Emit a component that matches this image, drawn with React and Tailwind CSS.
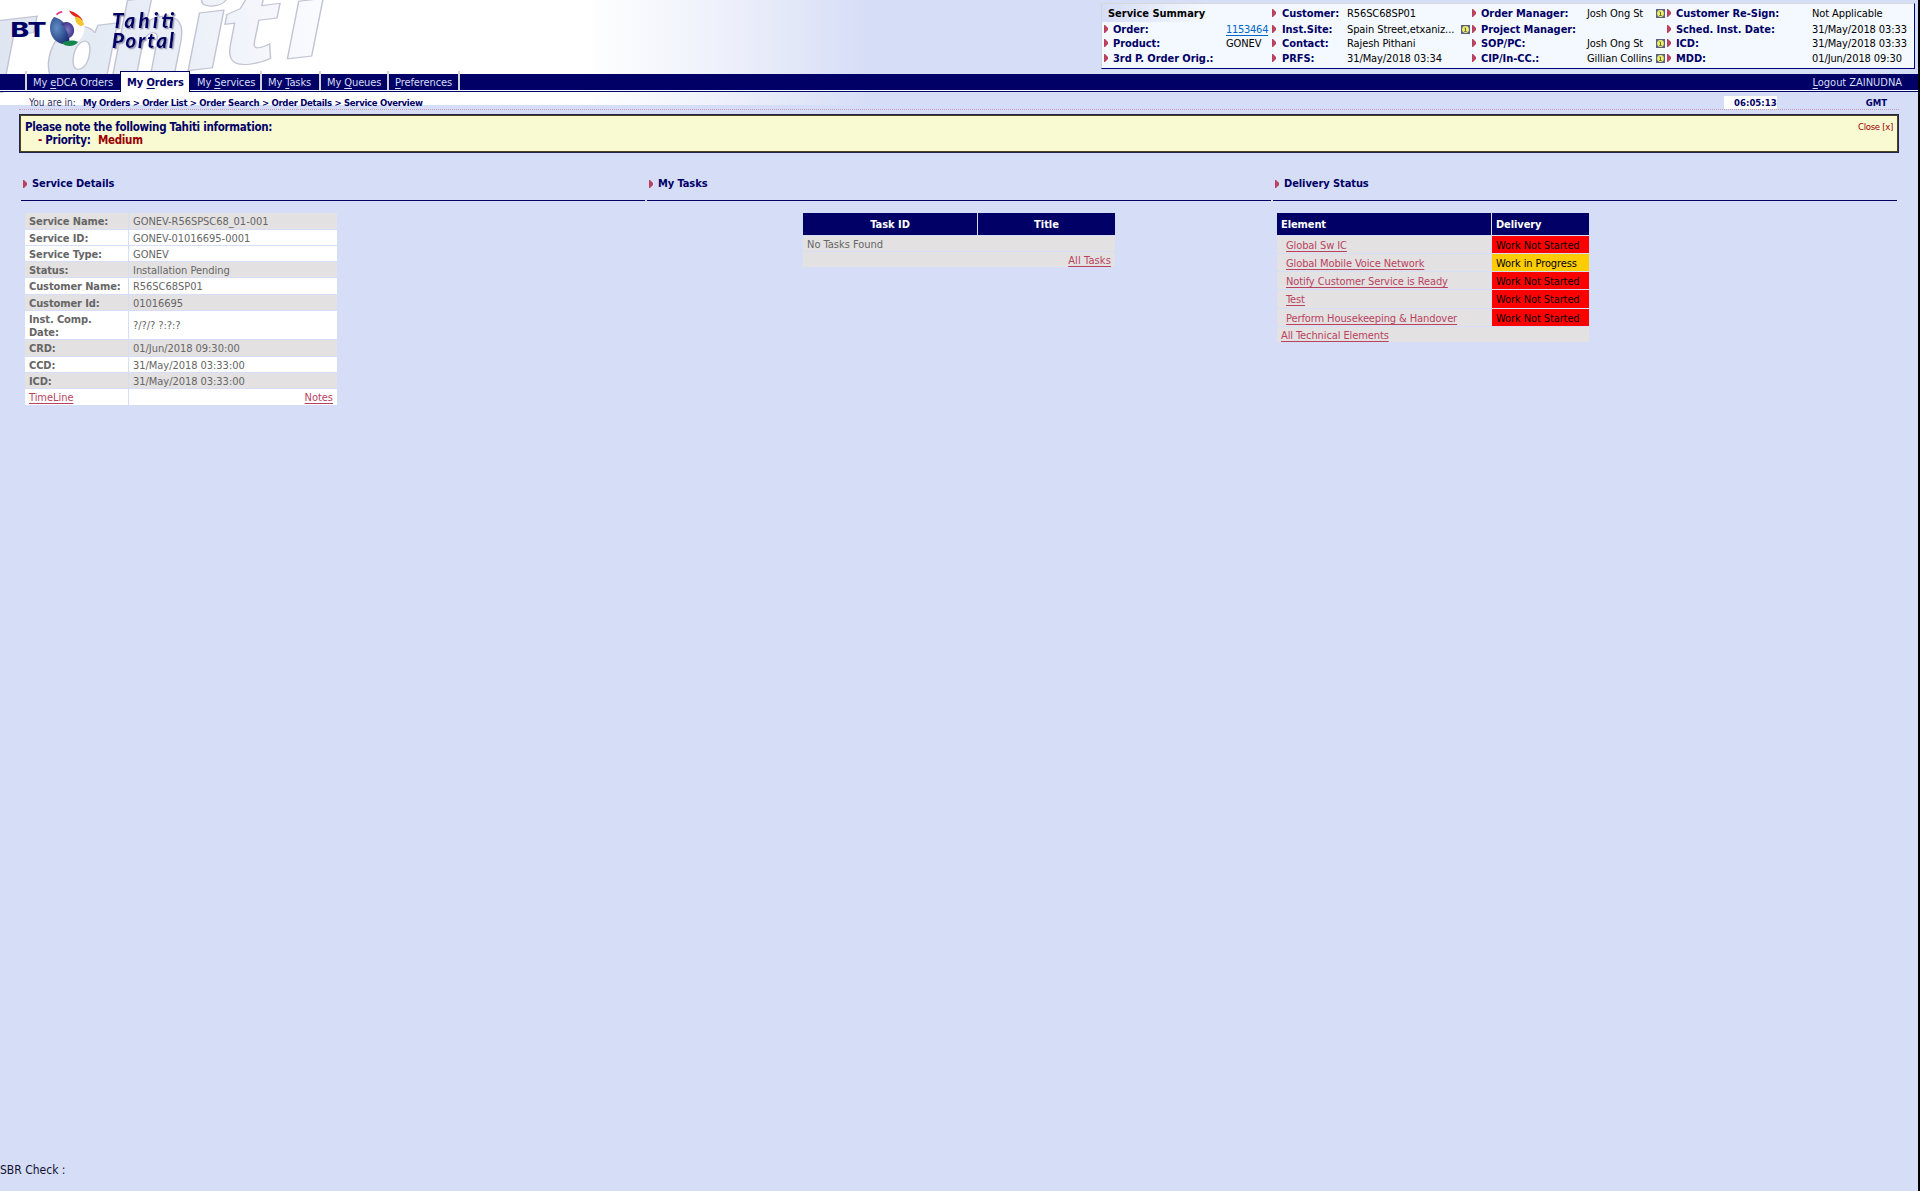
import React from "react";

const Arrow = ({ className = "" }) => (
  <svg className={"shrink-0 " + className} width="4" height="8" viewBox="0 0 4 8">
    <path d="M0 0H1L4 3V5L1 8H0Z" fill="#b9435f" />
  </svg>
);

const Info = () => (
  <svg width="9" height="9" viewBox="0 0 9 9" className="shrink-0">
    <rect width="9" height="9" fill="#5b5f86" />
    <circle cx="4.5" cy="4.5" r="3.4" fill="#eef06a" />
    <path d="M3.5 3H4.5V6M3.300 6.500H5.700" stroke="#5b5f30" strokeWidth="0.9" fill="none" />
  </svg>
);

const summaryRows = [
  [
    ["Service Summary", ""],
    ["Customer:", "R56SC68SP01", false],
    ["Order Manager:", "Josh Ong St", true],
    ["Customer Re-Sign:", "Not Applicable"],
  ],
  [
    ["Order:", "1153464"],
    ["Inst.Site:", "Spain Street,etxaniz...", true],
    ["Project Manager:", "", false],
    ["Sched. Inst. Date:", "31/May/2018 03:33"],
  ],
  [
    ["Product:", "GONEV"],
    ["Contact:", "Rajesh Pithani", false],
    ["SOP/PC:", "Josh Ong St", true],
    ["ICD:", "31/May/2018 03:33"],
  ],
  [
    ["3rd P. Order Orig.:", ""],
    ["PRFS:", "31/May/2018 03:34", false],
    ["CIP/In-CC.:", "Gillian Collins", true],
    ["MDD:", "01/Jun/2018 09:30"],
  ],
];

const Label = ({ children }) => (
  <span className="text-[11px] font-bold tracking-[-0.06px] text-[#000066]">{children}</span>
);

function Summary() {
  return (
    <div className="mt-[3px] ml-auto mr-[3px] h-[66px] w-[814px] border border-t-[#d8d8d8] border-r-[#000080] border-b-[#000080] border-l-[#d0d4e4] bg-[#f4f9ff]">
      <div className="grid grid-cols-[9px_2px_113px_46px_10px_65px_114px_11px_9px_106px_69px_11px_9px_136px_104px] grid-rows-[18px_14px_14px_16px] items-center whitespace-nowrap text-[11px] leading-[14px] tracking-[-0.1px] text-black [&>span]:pt-0.5">
        {summaryRows.map((r, i) => (
          <React.Fragment key={i}>
            {i === 0 ? (
              <div className="col-span-4 h-[18px] pl-[6px] leading-[20px] font-bold tracking-[-0.02px] bg-[linear-gradient(to_right,#d6ddf6_0px,#f4f9ff_104px)]">
                Service Summary
              </div>
            ) : (
              <>
                <Arrow className="ml-[2px]" />
                <span />
                <Label>{r[0][0]}</Label>
                <span className={i === 1 ? "tracking-[-0.27px] text-[#0066cc] underline underline-offset-2" : ""}>{r[0][1]}</span>
              </>
            )}
            <Arrow />
            <Label>{r[1][0]}</Label>
            <span>{r[1][1]}</span>
            {r[1][2] ? <Info /> : <i />}
            <Arrow />
            <Label>{r[2][0]}</Label>
            <span>{r[2][1]}</span>
            {r[2][2] ? <Info /> : <i />}
            <Arrow />
            <Label>{r[3][0]}</Label>
            <span>{r[3][1]}</span>
          </React.Fragment>
        ))}
      </div>
    </div>
  );
}

function Brand() {
  return (
    <svg width="340" height="93" viewBox="0 0 340 93" className="absolute left-0 top-0">
      <defs>
        <linearGradient id="fade" gradientUnits="userSpaceOnUse" x1="0" x2="265" y1="0" y2="0">
          <stop offset="0" stopColor="#dfe6f1" />
          <stop offset="0.5" stopColor="#e9eef7" />
          <stop offset="1" stopColor="#fcfcff" />
        </linearGradient>
        <radialGradient id="globe" cx="0.35" cy="0.4" r="0.7">
          <stop offset="0" stopColor="#5f8fc4" />
          <stop offset="1" stopColor="#1c2f78" />
        </radialGradient>
        <radialGradient id="core">
          <stop offset="0" stopColor="#8078c0" />
          <stop offset="1" stopColor="#41378e" />
        </radialGradient>
        <filter id="shade">
          <feDropShadow dx="1.3" dy="1.3" stdDeviation="0.6" floodColor="#9a9cb4" />
        </filter>
      </defs>
      <text
        transform="translate(0 93) rotate(-6.8) skewX(-3) scale(1.28 1)"
        x="-29 35 87 147 176 225"
        fontFamily="Noto Sans"
        fontWeight="900"
        fontStyle="italic"
        fontSize="101"
        fill="url(#fade)"
        stroke="#c2c4d4"
        strokeWidth="1.1"
      >
        Tahiti
      </text>
      <text x="10.5" y="37" fontFamily="Inter" fontWeight="800" fontSize="19.5" textLength="36" lengthAdjust="spacingAndGlyphs" fill="#000066">
        BT
      </text>
      <circle cx="67.500" cy="28" r="17" fill="#fff" />
      <path d="M54 17C64 19 71 30 69 44C58 46 50 38 50 28C50 24 51 20 54 17Z" fill="url(#globe)" />
      <path d="M61 24C65 20 73 22 74 29C75 34 71 38 68.500 38C68 32 65 27 61 24Z" fill="url(#core)" />
      <path d="M62 43C67 40 74 40 78 42C75 47 65 47 62 43Z" fill="#14854c" />
      <path d="M56 14C58 12 60 11 62 11L62.500 12.500C60 13 58 14 57 15.500Z" fill="#e6358c" />
      <path d="M69 10.500C75 12 81 16 83 21L78 18C75 17 71 15 69 10.500Z" fill="#e8211c" />
      <path d="M75 17C79 16 83 20 84 25L81 26C77 25 75 21 75 17Z" fill="#f6c52b" />
      <g fontFamily="Lato" fontWeight="900" fontStyle="italic" fontSize="20.5" fill="#000066" filter="url(#shade)">
        <text x="112" y="27.500" textLength="62">Tahiti</text>
        <text x="112" y="47.500" textLength="62">Portal</text>
      </g>
    </svg>
  );
}

const U = ({ children }) => <span className="underline underline-offset-2">{children}</span>;

const NavItem = ({ w, children }) => (
  <div className={"h-[19px] border-r-2 border-[#d4d4d8] pt-[3px] leading-[18px] " + w}>{children}</div>
);

function Nav() {
  return (
    <div className="relative flex h-[21px] items-start whitespace-nowrap text-[11px] tracking-[-0.1px] text-[#d6ddf6]">
      <div className="absolute inset-x-0 top-[3px] h-[18px] border-b border-[#000066]">
        <div className="h-4 bg-[#000066]" />
        <div className="h-px bg-[#f4f6ff]" />
      </div>
      <div className="relative flex">
        <div className="h-[19px] w-[27px] border-r-2 border-[#d4d4d8]" />
        <div className="h-[19px] w-[93px] pt-[3px] pl-[6px] leading-[18px]">
          My <U>e</U>DCA Orders
        </div>
        <div className="h-[21px] w-[70px] border border-b-0 border-[#000066] bg-white pt-[2px] pl-[6px] leading-[18px] font-bold text-[#000066]">
          My <U>O</U>rders
        </div>
        <NavItem w="w-[72px] pl-[7px]">My <U>S</U>ervices</NavItem>
        <NavItem w="w-[59px] pl-[6px]">My <U>T</U>asks</NavItem>
        <NavItem w="w-[68px] pl-[6px]">My <U>Q</U>ueues</NavItem>
        <NavItem w="w-[71px] pl-[6px]"><U>P</U>references</NavItem>
      </div>
      <div className="relative ml-auto mr-[16px] pt-[3px] leading-[18px] tracking-[-0.03px]">
        <U>L</U>ogout ZAINUDNA
      </div>
    </div>
  );
}

const Section = ({ title, children }) => (
  <div className="w-[624px]">
    <div className="flex h-[29px] items-center gap-[5px] border-b border-[#000066] pb-[5px] pl-[2px] text-[11px] font-bold tracking-[-0.08px] text-[#000066]">
      <Arrow />
      <span className="pt-0.5">{title}</span>
    </div>
    {children}
  </div>
);

const details = [
  ["Service Name:", "GONEV-R56SPSC68_01-001", "h-4 bg-[#e3e1e1]"],
  ["Service ID:", "GONEV-01016695-0001", "h-[15px] bg-white"],
  ["Service Type:", "GONEV", "h-[15px] bg-white"],
  ["Status:", "Installation Pending", "h-[15px] bg-[#e3e1e1]"],
  ["Customer Name:", "R56SC68SP01", "h-4 bg-white"],
  ["Customer Id:", "01016695", "h-[15px] bg-[#e3e1e1]"],
  ["Inst. Comp. Date:", "?/?/? ?:?:?", "h-7 bg-white"],
  ["CRD:", "01/Jun/2018 09:30:00", "h-4 bg-[#e3e1e1]"],
  ["CCD:", "31/May/2018 03:33:00", "h-[15px] bg-white"],
  ["ICD:", "31/May/2018 03:33:00", "h-[15px] bg-[#e3e1e1]"],
];

const elements = [
  ["Global Sw IC", false, "h-[17px]"],
  ["Global Mobile Voice Network", true, "h-[17px]"],
  ["Notify Customer Service is Ready", false, "h-[17px]"],
  ["Test", false, "h-[18px]"],
  ["Perform Housekeeping & Handover", false, "h-[17px]"],
];

const link = "text-[#b9435f] underline underline-offset-2 ";

export default function App() {
  return (
    <div className="flex h-[1191px] w-[1920px] flex-col overflow-hidden border-r-2 border-black bg-[#d6ddf6] font-['DejaVu_Sans_Condensed','DejaVu_Sans',sans-serif] [font-stretch:condensed]">
      <div className="relative h-[105px] shrink-0 bg-[linear-gradient(to_right,#fff_585px,#eef1fb_720px,#d6ddf6_870px)]">
        <Brand />
        <div className="flex h-[71px]">
          <Summary />
        </div>
        <Nav />
        <div className="relative ml-[19px] flex h-[18px] w-[1880px] border-b border-dotted border-[#c79ab4] text-[9.5px] text-[#000066]">
          <div className="flex h-[16px] whitespace-pre pt-[4px] pl-[10px] leading-[14px]">
            <span className="w-[54px] text-[10px] text-[#333366]">You are in:</span>
            <b className="tracking-[-0.31px]">My Orders &gt; Order List &gt; Order Search &gt; Order Details &gt; Service Overview</b>
          </div>
          <b className="mt-[4px] ml-auto mr-[89px] h-[13px] w-[53px] bg-white text-right leading-[14px]">06:05:13</b>
          <b className="mt-[4px] mr-[12px] leading-[14px]">GMT</b>
        </div>
      </div>
      <div className="mt-[9px] ml-[19px] h-[39px] w-[1880px] shrink-0 border border-[#24244c] bg-[#f9f9d2]">
        <div className="flex h-full justify-between border border-[#4b431c] pt-[5px] pl-[4px] pr-[4px] text-[11.5px] leading-[13px] font-bold tracking-[-0.29px] text-[#000066]">
          <div className="whitespace-pre">
            <div>Please note the following Tahiti information:</div>
            <div className="flex pl-[13px]">
              <span className="w-[60px]"><span className="text-[#990000]">-</span> Priority:</span>
              <span className="text-[#990000]">Medium</span>
            </div>
          </div>
          <span className="text-[9.5px] leading-[11px] font-normal tracking-[-0.3px] text-[#990000]">Close [x]</span>
        </div>
      </div>

      <div className="mt-[19px] ml-[21px] flex gap-[2px] whitespace-nowrap text-[11px]">
        <Section title="Service Details">
          <div className="mt-3 ml-1 flex w-[312px] flex-col gap-px text-[#666] tracking-[-0.04px]">
            {details.map(([k, v, c]) => (
              <div key={k} className="flex gap-px">
                <div className={"flex w-[103px] items-center pt-px pl-1 leading-[13px] font-bold whitespace-normal tracking-[-0.1px] " + c}>
                  <span className={k.startsWith("Inst") ? "w-[75px]" : "whitespace-nowrap"}>{k}</span>
                </div>
                <div className={"flex flex-1 items-center pt-px pl-1 leading-[13px] " + c}>{v}</div>
              </div>
            ))}
            <div className="flex gap-px leading-[18px]">
              <div className="h-4 w-[103px] bg-white pl-1"><span className={link}>TimeLine</span></div>
              <div className="h-4 flex-1 bg-white pr-1 text-right"><span className={link}>Notes</span></div>
            </div>
          </div>
        </Section>

        <Section title="My Tasks">
          <div className="mx-auto mt-3 flex w-[312px] flex-col gap-px tracking-[-0.02px]">
            <div className="flex h-[22px] gap-px text-center leading-[24px] font-bold text-white">
              <div className="w-[174px] bg-[#000066]">Task ID</div>
              <div className="flex-1 bg-[#000066]">Title</div>
            </div>
            <div className="h-[15px] bg-[#e3e1e1] pl-1 leading-[18px] text-[#666]">No Tasks Found</div>
            <div className="h-[15px] bg-[#e3e1e1] pr-1 text-right leading-[18px] tracking-[0.12px]"><span className={link}>All Tasks</span></div>
          </div>
        </Section>

        <Section title="Delivery Status">
          <div className="mt-3 ml-1 flex w-[312px] flex-col gap-px tracking-[-0.1px]">
            <div className="flex h-[22px] gap-px leading-[24px] font-bold text-white">
              <div className="w-[214px] bg-[#000066] pl-1">Element</div>
              <div className="flex-1 bg-[#000066] pl-1">Delivery</div>
            </div>
            {elements.map(([name, progress, h]) => (
              <div key={name} className={"flex gap-px leading-[20px] " + h}>
                <div className="w-[214px] bg-[#e3e1e1] pl-[9px]"><span className={link}>{name}</span></div>
                <div className={"flex-1 pl-1 text-black " + (progress ? "bg-[#ffcc00]" : "bg-[#ff0000]")}>
                  {progress ? "Work in Progress" : "Work Not Started"}
                </div>
              </div>
            ))}
            <div className="h-[15px] bg-[#e3e1e1] pl-1 leading-[18px]"><span className={link}>All Technical Elements</span></div>
          </div>
        </Section>
      </div>

      <div className="mt-auto mb-[13px] text-[12px] leading-[16px] text-[#111133]">SBR Check :</div>
    </div>
  );
}
